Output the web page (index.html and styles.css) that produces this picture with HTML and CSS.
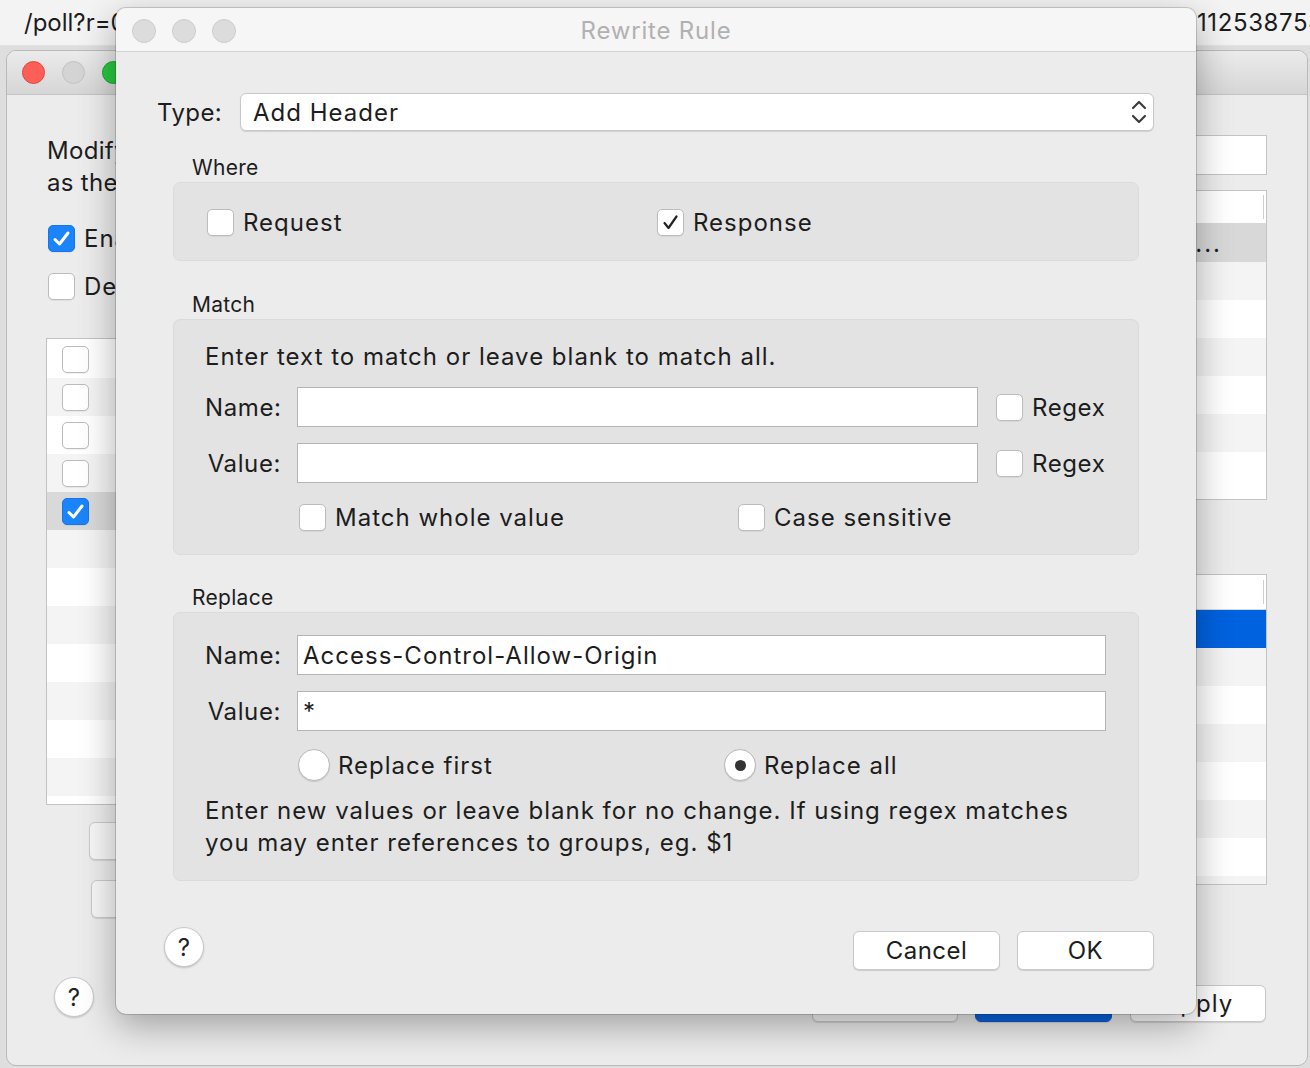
FILE: index.html
```html
<!DOCTYPE html>
<html>
<head>
<meta charset="utf-8">
<title>Rewrite Rule</title>
<link rel="stylesheet" href="styles.css">
</head>
<body>
<div class="desktop">
  <div class="bg-strip"><span class="strip-left">/poll?r=0.</span><span class="strip-right">112538754</span></div>

  <div class="win-back">
    <div class="tb-back"><span class="light red"></span><span class="light gray"></span><span class="light green"></span></div>
    <div class="back-body">
      <div class="back-left">
        <p class="back-desc">Modify requests and responses<br>as they pass through</p>
        <div class="back-check first"><span class="cb cb-blue"><svg width="27" height="27" viewBox="0 0 27 27"><path d="M7 14.5 L11.5 19 L20 8" fill="none" stroke="#fff" stroke-width="3" stroke-linecap="round" stroke-linejoin="round"/></svg></span>Enable Rewrite</div>
        <div class="back-check"><span class="cb"></span>Debug</div>
        <div class="back-list">
          <div class="lrow"><span class="cb"></span></div>
          <div class="lrow alt"><span class="cb"></span></div>
          <div class="lrow"><span class="cb"></span></div>
          <div class="lrow alt"><span class="cb"></span></div>
          <div class="lrow sel"><span class="cb cb-blue"><svg width="27" height="27" viewBox="0 0 27 27"><path d="M7 14.5 L11.5 19 L20 8" fill="none" stroke="#fff" stroke-width="3" stroke-linecap="round" stroke-linejoin="round"/></svg></span></div>
          <div class="lrow alt"></div>
          <div class="lrow"></div>
          <div class="lrow alt"></div>
          <div class="lrow"></div>
          <div class="lrow alt"></div>
          <div class="lrow"></div>
          <div class="lrow alt"></div>
          <div class="lrow"></div>
        </div>
        <div class="back-btn b1">Add</div>
        <div class="back-btn b2">Remove</div>
      </div>
      <div class="back-right">
        <div class="back-field"></div>
        <div class="back-table t1">
          <div class="thead"><span class="thead-cell"></span></div>
          <div class="trow grey"><span class="trow-text">...</span></div>
          <div class="trow alt"></div>
          <div class="trow"></div>
          <div class="trow alt"></div>
          <div class="trow"></div>
          <div class="trow alt"></div>
          <div class="trow"></div>
        </div>
        <div class="back-table t2">
          <div class="thead"><span class="thead-cell"></span></div>
          <div class="trow blue"></div>
          <div class="trow alt"></div>
          <div class="trow"></div>
          <div class="trow alt"></div>
          <div class="trow"></div>
          <div class="trow alt"></div>
          <div class="trow"></div>
          <div class="trow alt"></div>
        </div>
      </div>
    </div>
    <div class="back-footer">
      <span class="help back-help">?</span>
      <span class="fbtn f1">Cancel</span>
      <span class="fbtn f2">OK</span>
      <span class="fbtn f3">Apply</span>
    </div>
  </div>

  <div class="dialog">
    <div class="dlg-title">
      <div class="dlg-lights"><span class="light off"></span><span class="light off"></span><span class="light off"></span></div>
      <div class="dlg-title-text">Rewrite Rule</div>
      <div></div>
    </div>
    <div class="dlg-body">
      <div class="type-row">
        <span class="type-label">Type:</span>
        <div class="select">
          <span>Add Header</span>
          <svg class="chev" width="16" height="26" viewBox="0 0 16 26"><path d="M2 9 L8 3 L14 9 M2 17 L8 23 L14 17" fill="none" stroke="#3c3c3c" stroke-width="2.2" stroke-linecap="round" stroke-linejoin="round"/></svg>
        </div>
      </div>

      <div class="sec-label">Where</div>
      <div class="group where">
        <div class="where-grid">
          <div class="check"><span class="cb"></span>Request</div>
          <div class="check"><span class="cb"><svg width="27" height="27" viewBox="0 0 27 27"><path d="M7.5 14 L11.5 19 L19.5 7.5" fill="none" stroke="#222" stroke-width="2.2" stroke-linecap="round" stroke-linejoin="round"/></svg></span>Response</div>
        </div>
      </div>

      <div class="sec-label sec-match">Match</div>
      <div class="group match">
        <div class="desc">Enter text to match or leave blank to match all.</div>
        <div class="field-grid match-grid">
          <span class="flabel">Name:</span>
          <div class="input"></div>
          <div class="check regex"><span class="cb"></span>Regex</div>
          <span class="flabel">Value:</span>
          <div class="input"></div>
          <div class="check regex"><span class="cb"></span>Regex</div>
        </div>
        <div class="opt-row match-opts">
          <div class="check"><span class="cb"></span>Match whole value</div>
          <div class="check"><span class="cb"></span>Case sensitive</div>
        </div>
      </div>

      <div class="sec-label sec-replace">Replace</div>
      <div class="group replace">
        <div class="field-grid replace-grid">
          <span class="flabel">Name:</span>
          <div class="input">Access-Control-Allow-Origin</div>
          <span class="flabel">Value:</span>
          <div class="input">*</div>
        </div>
        <div class="opt-row replace-opts">
          <div class="check radio-item"><span class="radio"></span>Replace first</div>
          <div class="check radio-item"><span class="radio on"></span>Replace all</div>
        </div>
        <div class="desc desc2">Enter new values or leave blank for no change. If using regex matches<br>you may enter references to groups, eg. $1</div>
      </div>

      <div class="dlg-footer">
        <span class="help">?</span>
        <span class="btn cancel">Cancel</span>
        <span class="btn ok">OK</span>
      </div>
    </div>
  </div>
</div>
</body>
</html>
```

FILE: styles.css
```css
* { box-sizing: border-box; }

body {
  margin: 0;
  width: 1310px;
  height: 1068px;
  overflow: hidden;
  background: #dedede;
  font-family: Inter, "Liberation Sans", "DejaVu Sans", sans-serif;
  color: #1d1d1d;
  letter-spacing: 1px;
}

.desktop {
  position: relative;
  width: 1310px;
  height: 1068px;
}

/* window row behind everything */
.bg-strip {
  height: 46px;
  background: #f3f3f3;
  display: flex;
  align-items: center;
  padding-left: 24px;
  font-size: 24px;
  white-space: nowrap;
  overflow: hidden;
  color: #1c1c1c;
  border-bottom: 1px solid #e2e2e2;
}
.strip-left { width: 1173px; flex: none; letter-spacing: 0; }
.strip-right { letter-spacing: 0.6px; }

/* background window */
.win-back {
  position: absolute;
  left: 6px;
  top: 50px;
  width: 1302px;
  height: 1016px;
  border: 1px solid #b9b9b9;
  border-radius: 10px;
  background: #ececec;
  overflow: hidden;
  display: flex;
  flex-direction: column;
}

.tb-back {
  height: 44px;
  flex: none;
  border-bottom: 1px solid #c4c4c4;
  background: linear-gradient(#ebebeb, #d6d6d6);
  display: flex;
  align-items: center;
  gap: 17px;
  padding-left: 15px;
}

.light {
  width: 23px;
  height: 23px;
  border-radius: 50%;
  display: block;
  flex: none;
}
.red { background: #fd5f57; border: 1px solid #e1463f; }
.gray { background: #d4d4d4; border: 1px solid #c2c2c2; }
.green { background: #28c840; border: 1px solid #1ba82c; }
.off { width: 24px; height: 24px; background: #dcdcdc; border: 1px solid #cdcdcd; }

.back-body {
  display: grid;
  grid-template-columns: 430px 1fr;
  column-gap: 40px;
  padding: 0 40px 0 39px;
}

.back-desc {
  margin: 40px 0 0 1px;
  font-size: 24px;
  line-height: 32px;
  white-space: nowrap;
  letter-spacing: 0.3px;
}

.back-check {
  display: flex;
  align-items: center;
  gap: 9px;
  height: 32px;
  font-size: 24px;
  margin: 16px 0 0 2px;
  white-space: nowrap;
}
.back-check.first { margin-top: 23px; }

.back-list {
  margin-top: 36px;
  height: 467px;
  border: 1px solid #c2c2c2;
  background: #fff;
  padding-top: 1px;
  overflow: hidden;
}
.lrow {
  height: 38px;
  display: flex;
  align-items: center;
  padding-left: 15px;
  background: #fff;
}
.lrow.alt { background: #f4f4f4; }
.lrow.sel { background: #d9d9d9; }

.back-btn {
  height: 38px;
  width: 200px;
  border: 1px solid #cacaca;
  border-radius: 6px;
  background: #f7f7f7;
  box-shadow: 0 1px 1px rgba(0,0,0,.1);
  font-size: 24px;
  display: flex;
  align-items: center;
  justify-content: center;
}
.b1 { margin: 17px 0 0 43px; }
.b2 { margin: 20px 0 0 45px; }

.back-field {
  margin-top: 40px;
  height: 40px;
  border: 1px solid #c4c4c4;
  background: #fff;
}

.back-table {
  border: 1px solid #c4c4c4;
  background: #fff;
  overflow: hidden;
}
.t1 { margin-top: 15px; height: 310px; }
.t2 { margin-top: 74px; height: 311px; }

.thead {
  height: 33px;
  background: #fff;
  border-bottom: 1px solid #d8d8d8;
  display: flex;
  justify-content: flex-end;
  align-items: center;
  padding-right: 2px;
}
.thead-cell {
  width: 1px;
  height: 24px;
  background: #cfcfcf;
}

.trow {
  height: 38px;
  background: #fff;
  display: flex;
  align-items: center;
  justify-content: flex-end;
  font-size: 24px;
  padding-right: 44px;
  white-space: nowrap;
  overflow: hidden;
  letter-spacing: 2px;
}
.trow.alt { background: #f4f4f4; }
.trow.grey { background: #d8d8d8; }
.trow.blue { background: #0062df; }
.t2 .thead { height: 35px; }

.back-footer {
  margin-top: auto;
  display: flex;
  align-items: flex-end;
  padding: 0 41px 43px 47px;
}
.back-help { margin-bottom: 5px; }
.fbtn {
  height: 37px;
  border: 1px solid #c8c8c8;
  border-radius: 6px;
  background: #f7f7f7;
  box-shadow: 0 1px 1px rgba(0,0,0,.12);
  font-size: 24px;
  display: flex;
  align-items: center;
  justify-content: center;
}
.f1 { width: 146px; margin-left: auto; }
.f2 { width: 137px; margin-left: 17px; background: #0a63df; border-color: #0a5ad0; color: #fff; }
.f3 { width: 136px; margin-left: 18px; background: #fff; }

/* dialog */
.dialog {
  position: absolute;
  left: 116px;
  top: 8px;
  width: 1080px;
  height: 1006px;
  border-radius: 10px;
  background: #ececec;
  overflow: hidden;
  box-shadow: 0 0 0 1px rgba(0,0,0,.16), 0 12px 36px rgba(0,0,0,.32);
}

.dlg-title {
  height: 44px;
  background: #f6f6f6;
  border-bottom: 1px solid #d2d2d2;
  display: grid;
  grid-template-columns: 1fr auto 1fr;
  align-items: center;
  padding-top: 2px;
}
.dlg-lights {
  display: flex;
  gap: 16px;
  padding-left: 16px;
}
.dlg-title-text {
  font-size: 24px;
  color: #b1b1b1;
  letter-spacing: 0.8px;
}

.dlg-body {
  padding: 41px 42px 0 41px;
}

.type-row {
  display: flex;
  align-items: center;
}
.type-label {
  width: 83px;
  font-size: 24px;
  flex: none;
  letter-spacing: 0.4px;
}
.select {
  flex: 1;
  height: 38px;
  border: 1px solid #c8c8c8;
  border-radius: 6px;
  background: #fff;
  box-shadow: 0 1px 1px rgba(0,0,0,.12);
  display: flex;
  align-items: center;
  justify-content: space-between;
  padding: 0 6px 0 12px;
  font-size: 24px;
}
.chev { display: block; }

.sec-label {
  font-size: 21px;
  line-height: 26px;
  margin: 24px 0 1px 35px;
  letter-spacing: 0.3px;
}
.sec-label.sec-match { margin-top: 31px; }
.sec-label.sec-replace { margin-top: 30px; }

.group {
  margin: 0 15px 0 16px;
  background: #e3e3e3;
  border: 1px solid #dbdbdb;
  border-radius: 7px;
}

.where { padding: 23px 0 22px 33px; }
.where-grid {
  display: grid;
  grid-template-columns: 450px 1fr;
}

.check {
  display: flex;
  align-items: center;
  gap: 9px;
  height: 32px;
  font-size: 24px;
  white-space: nowrap;
}

.cb {
  width: 27px;
  height: 27px;
  flex: none;
  border: 1px solid #bcbcbc;
  border-radius: 5px;
  background: #fff;
  box-shadow: 0 1px 1px rgba(0,0,0,.06);
  display: flex;
  align-items: center;
  justify-content: center;
}
.cb svg { display: block; flex: none; }
.cb-blue { background: #1b84fb; border-color: #1676e8; }

.match { padding: 21px 0 21px 31px; }
.replace { padding: 22px 32px 21px 31px; }

.desc {
  font-size: 24px;
  line-height: 32px;
  white-space: nowrap;
}

.field-grid {
  display: grid;
  column-gap: 16px;
  row-gap: 16px;
  align-items: center;
}
.match-grid {
  margin-top: 14px;
  grid-template-columns: 76px 681px auto;
}
.replace-grid {
  grid-template-columns: 76px 1fr;
}
.flabel {
  font-size: 24px;
  text-align: right;
  letter-spacing: 0.6px;
}
.input {
  height: 40px;
  border: 1px solid #b5b5b5;
  background: #fff;
  font-size: 24px;
  padding-left: 5px;
  display: flex;
  align-items: center;
  white-space: nowrap;
}
.regex { margin-left: 2px; letter-spacing: 0.6px; }

.opt-row { display: grid; }
.match-opts {
  margin: 18px 0 0 94px;
  grid-template-columns: 439px auto;
}
.replace-opts {
  margin: 18px 0 0 93px;
  grid-template-columns: 426px auto;
}
.radio-item { gap: 8px; }
.radio {
  width: 32px;
  height: 32px;
  flex: none;
  border-radius: 50%;
  border: 1px solid #b8b8b8;
  background: #fff;
  box-shadow: 0 1px 1px rgba(0,0,0,.12);
  display: flex;
  align-items: center;
  justify-content: center;
}
.radio.on::after {
  content: "";
  width: 11px;
  height: 11px;
  border-radius: 50%;
  background: #333;
}
.desc2 { margin-top: 14px; }

.dlg-footer {
  display: flex;
  align-items: flex-start;
  margin-top: 46px;
  padding-left: 7px;
}
.help {
  width: 40px;
  height: 40px;
  flex: none;
  border-radius: 50%;
  border: 1px solid #c9c9c9;
  background: #fff;
  box-shadow: 0 1px 2px rgba(0,0,0,.18);
  font-size: 24px;
  letter-spacing: 0;
  display: flex;
  align-items: center;
  justify-content: center;
  color: #222;
}
.btn {
  height: 39px;
  margin-top: 4px;
  border: 1px solid #c9c9c9;
  border-radius: 6px;
  background: #fff;
  box-shadow: 0 1px 1px rgba(0,0,0,.14);
  font-size: 24px;
  letter-spacing: 0.5px;
  display: flex;
  align-items: center;
  justify-content: center;
}
.cancel { width: 147px; margin-left: auto; }
.ok { width: 137px; margin-left: 17px; }
```
